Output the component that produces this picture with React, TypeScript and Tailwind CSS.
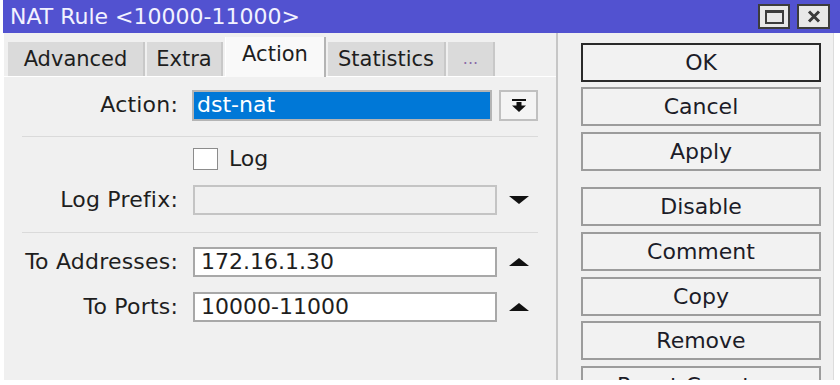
import React from "react";

const tabs = [
  { label: "Advanced", w: "w-[137px]" },
  { label: "Extra", w: "w-[76px]" },
  { label: "Action", w: "w-[101px]", active: true },
  { label: "Statistics", w: "w-[118px]" },
  { label: "...", w: "w-[47px]" },
];

const buttons = [
  { label: "OK", mt: "mt-0", primary: true },
  { label: "Cancel", mt: "mt-[5px]" },
  { label: "Apply", mt: "mt-[6px]" },
  { label: "Disable", mt: "mt-[16px]" },
  { label: "Comment", mt: "mt-[6px]" },
  { label: "Copy", mt: "mt-[6px]" },
  { label: "Remove", mt: "mt-[5px]" },
  { label: "Reset Counters", mt: "mt-[6px]" },
];

function Triangle({ up }: { up?: boolean }) {
  return (
    <svg width="22" height="10" viewBox="0 0 22 10" className="ml-[11px]">
      {up ? (
        <polygon points="1,9 21,9 11,1" fill="#111" />
      ) : (
        <polygon points="1,1 21,1 11,9" fill="#111" />
      )}
    </svg>
  );
}

function Label({ children }: { children: React.ReactNode }) {
  return <div className="w-[174px] text-right text-[#1e1e1e] tracking-[0.2px]">{children}</div>;
}

function Field({ value, disabled }: { value?: string; disabled?: boolean }) {
  return (
    <div
      className={`ml-[15px] w-[304px] h-[30px] border-2 border-[#a8a8a8] flex items-center pl-[6px] text-[#1e1e1e] ${
        disabled ? "bg-[#f0f0f0] border-[#c4c4c4]" : "bg-white"
      }`}
    >
      {value}
    </div>
  );
}

export default function App() {
  return (
    <div className="w-[840px] h-[385px] bg-white overflow-hidden font-['DejaVu_Sans',sans-serif] text-[22px] leading-none">
      {/* title bar */}
      <div className="ml-[3px] h-[33px] bg-[#5252d0] flex items-center pl-[7px] pr-[10px]">
        <span className="text-[#f2f2ff] text-[22px]">NAT Rule &lt;10000-11000&gt;</span>
        <div className="ml-auto flex gap-[7px]">
          <div className="w-[32px] h-[25px] bg-[#e8e8e8] border-2 border-[#3c3c3c] flex items-center justify-center">
            <div className="w-[19px] h-[14px] border-2 border-t-[3px] border-[#3c3c3c]" />
          </div>
          <div className="w-[33px] h-[25px] bg-[#e8e8e8] border-2 border-[#3c3c3c] flex items-center justify-center">
            <svg width="14" height="13" viewBox="0 0 14 13">
              <path d="M2 1.5 L12 11.5 M12 1.5 L2 11.5" stroke="#3a3a3a" strokeWidth="3" />
            </svg>
          </div>
        </div>
      </div>

      {/* body */}
      <div className="ml-[4px] w-[830px] h-[347px] bg-[#f0f0f0] border-r border-[#dcdcdc] flex overflow-hidden">
        {/* left pane */}
        <div className="w-[554px] flex flex-col border-r-2 border-[#c6c6c6]">
          <div className="h-[43px] flex items-end gap-[2px] pl-[4px] text-[21px]">
            {tabs.map((t) =>
              t.active ? (
                <div
                  key={t.label}
                  className={`${t.w} h-[40px] -mb-[1px] relative bg-[#f9f9f9] border-l border-r-2 border-l-[#ffffff] border-r-[#b4b4b4] flex items-center justify-center pb-[6px] text-[#1e1e1e]`}
                >
                  {t.label}
                </div>
              ) : (
                <div
                  key={t.label}
                  className={`${t.w} h-[34px] bg-[#dadada] border-r-2 border-[#c8c8c8] flex items-center justify-center ${
                    t.label === "..." ? "text-[#8a6aa8] text-[16px]" : "text-[#1e1e1e]"
                  }`}
                >
                  {t.label}
                </div>
              )
            )}
          </div>

          <div className="flex-1 border-t border-[#ffffff] flex flex-col">
            {/* Action */}
            <div className="mt-[13px] h-[30px] flex items-center">
              <Label>Action:</Label>
              <div className="ml-[14px] w-[300px] h-[31px] border-2 border-[#b4b4b4] bg-[#0078d7] flex items-center pl-[3px] text-white">
                dst-nat
              </div>
              <div className="ml-[7px] w-[39px] h-[31px] border-2 border-[#c0c0c0] bg-[#f4f4f4] flex items-center justify-center">
                <svg width="14" height="13" viewBox="0 0 14 13">
                  <rect x="0" y="0" width="14" height="2" fill="#111" />
                  <rect x="4.5" y="3" width="5" height="4" fill="#111" />
                  <polygon points="0,6.5 14,6.5 7,13" fill="#111" />
                </svg>
              </div>
            </div>

            <div className="mt-[16px] ml-[18px] w-[516px] h-[1px] bg-[#dadada]" />

            {/* Log */}
            <div className="mt-[11px] h-[22px] flex items-center">
              <div className="ml-[189px] w-[25px] h-[22px] bg-white border border-[#8c8c8c]" />
              <span className="ml-[11px] text-[#1e1e1e]">Log</span>
            </div>

            {/* Log Prefix */}
            <div className="mt-[15px] h-[30px] flex items-center">
              <Label>Log Prefix:</Label>
              <Field disabled />
              <Triangle />
            </div>

            <div className="mt-[17px] ml-[18px] w-[516px] h-[1px] bg-[#dadada]" />

            <div className="mt-[14px] h-[30px] flex items-center">
              <Label>To Addresses:</Label>
              <Field value="172.16.1.30" />
              <Triangle up />
            </div>

            <div className="mt-[15px] h-[30px] flex items-center">
              <Label>To Ports:</Label>
              <Field value="10000-11000" />
              <Triangle up />
            </div>
          </div>
        </div>

        {/* right pane */}
        <div className="flex-1 pl-[23px] pt-[10px] flex flex-col">
          {buttons.map((b) => (
            <div
              key={b.label}
              className={`${b.mt} shrink-0 w-[240px] h-[39px] border-2 ${
                b.primary ? "border-[#2a2a2a]" : "border-[#9c9c9c]"
              } bg-[#f2f2f2] flex items-center justify-center text-[#1c1c28]`}
            >
              {b.label}
            </div>
          ))}
        </div>
      </div>
    </div>
  );
}
